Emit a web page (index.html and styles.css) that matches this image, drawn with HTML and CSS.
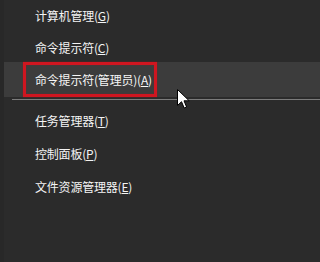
FILE: index.html
```html
<!DOCTYPE html>
<html lang="zh-CN">
<head>
<meta charset="utf-8">
<title>Win+X 菜单</title>
<link rel="stylesheet" href="styles.css">
</head>
<body>
<div class="screen">
  <ul class="menu">
    <li class="item first">计算机管理(<u>G</u>)</li>
    <li class="item">命令提示符(<u>C</u>)</li>
    <li class="item active"><span class="mark">命令提示符(管理员)(<u>A</u>)</span></li>
    <li class="sep"></li>
    <li class="item after-sep">任务管理器(<u>T</u>)</li>
    <li class="item">控制面板(<u>P</u>)</li>
    <li class="item">文件资源管理器(<u>E</u>)</li>
  </ul>
  <svg class="cursor" width="13" height="20" viewBox="0 0 13 20" aria-hidden="true">
    <path d="M0.5 0.5 V16.5 L4.5 12.7 L7.2 19 L9.6 18 L7 11.8 H12.2 Z" fill="#ffffff" stroke="#000000" stroke-width="1" stroke-linejoin="miter"/>
  </svg>
</div>
</body>
</html>
```
FILE: styles.css
```css
html, body {
  margin: 0;
  padding: 0;
  background: #2b2b2b;
}
.screen {
  position: relative;
  width: 100%;
  min-width: 201px;
  height: 262px;
  overflow: hidden;
  background: #2b2b2b;
  border-left: 4px solid #282828;
  box-sizing: border-box;
  font-family: "Noto Sans CJK SC", "Noto Sans", sans-serif;
  font-size: 12px;
  color: #f4f4f4;
}
.menu {
  list-style: none;
  margin: 0;
  padding: 0;
  display: flex;
  flex-direction: column;
}
.item {
  height: 33px;
  display: flex;
  align-items: center;
  padding-left: 31px;
  white-space: nowrap;
  letter-spacing: -0.2px;
}
.item u {
  text-decoration-thickness: 1px;
  text-underline-offset: 1px;
}
.item.first {
  height: 31px;
}
.item.active {
  margin-top: -2px;
  height: 35px;
  padding-left: 19px;
  background: #3c3c3c;
}
.mark {
  box-sizing: border-box;
  width: 134px;
  height: 35px;
  display: flex;
  align-items: center;
  padding-left: 9px;
  border: 3px solid #cf1620;
  box-shadow: 0 0 1px #9a1a1f, inset 0 0 1px #9a1a1f;
  color: #f6f6f6;
}
.sep {
  height: 1px;
  margin: 2px 0 0 8px;
  background: #7c7c7c;
}
.item.after-sep {
  margin-top: 4px;
}
.cursor {
  position: absolute;
  left: 173px;
  top: 89px;
}
```
